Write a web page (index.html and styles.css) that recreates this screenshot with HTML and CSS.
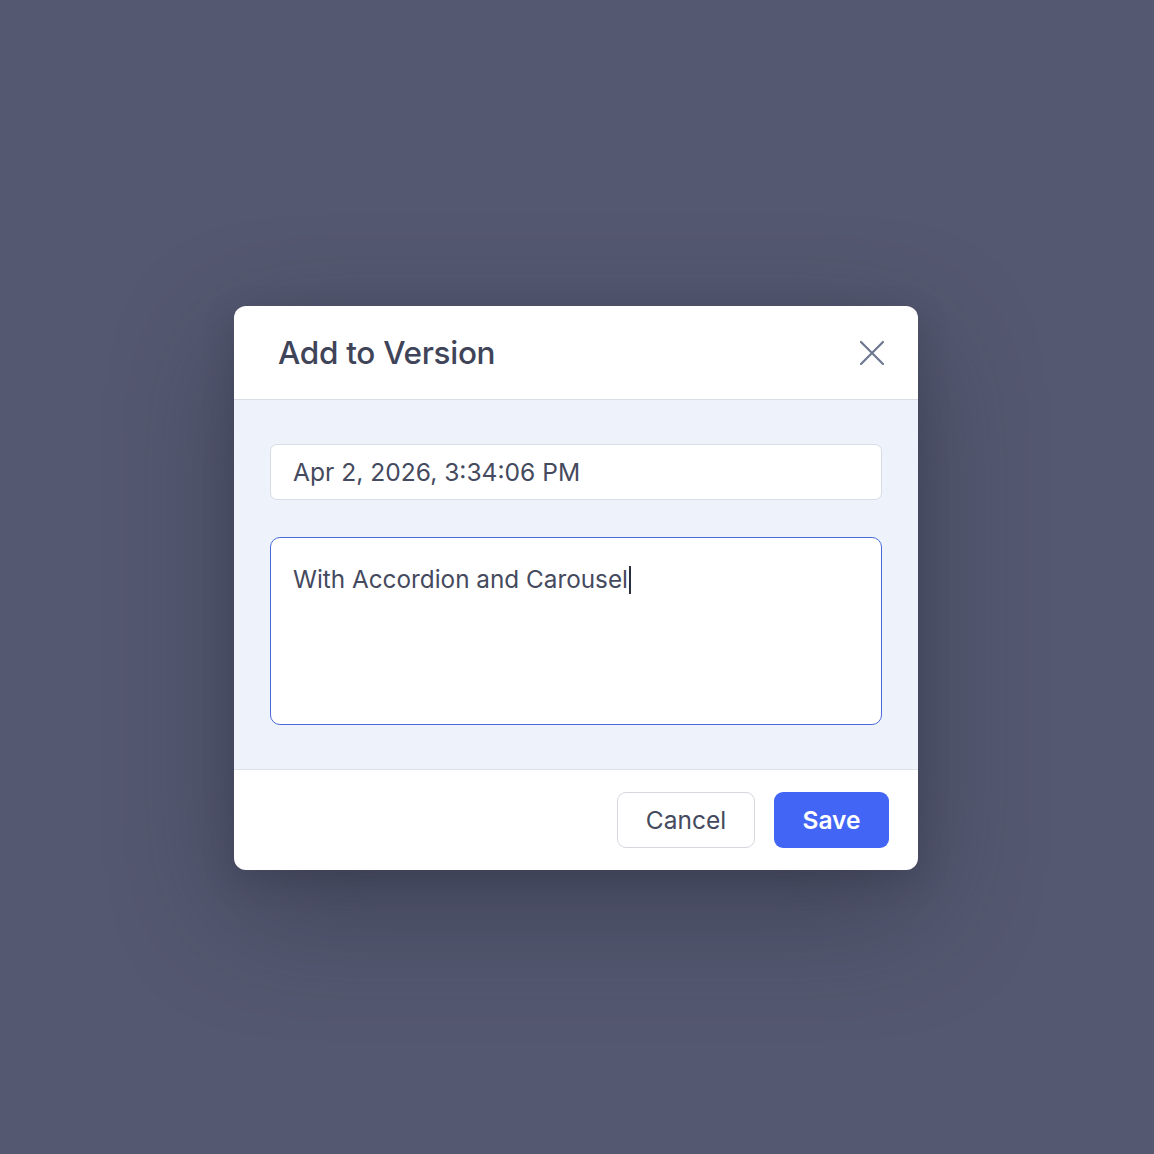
FILE: index.html
```html
<!DOCTYPE html>
<html>
<head>
<meta charset="utf-8">
<link rel="stylesheet" href="styles.css">
</head>
<body>
<div class="overlay">
  <div class="modal">
    <div class="modal-header">
      <h2 class="modal-title">Add to Version</h2>
      <button class="close-btn" aria-label="Close">
        <svg width="26" height="26" viewBox="0 0 26 26"><path d="M2 2 L24 24 M24 2 L2 24" stroke="#6e7791" stroke-width="2.2" stroke-linecap="round" fill="none"/></svg>
      </button>
    </div>
    <div class="modal-body">
      <div class="field">Apr 2, 2026, 3:34:06 PM</div>
      <div class="textarea">With Accordion and Carousel<span class="caret"></span></div>
    </div>
    <div class="modal-footer">
      <button class="btn btn-cancel">Cancel</button>
      <button class="btn btn-save">Save</button>
    </div>
  </div>
</div>
</body>
</html>
```
FILE: styles.css
```css
* { box-sizing: border-box; }
html, body { margin: 0; padding: 0; }
body {
  background: #545870;
  font-family: Inter, "Noto Sans", sans-serif;
  width: 1154px;
  height: 1154px;
}
.overlay {
  height: 1154px;
  display: flex;
  justify-content: flex-start;
  padding-top: 306px;
  padding-left: 234px;
}
.modal {
  width: 684px;
  height: 564px;
  background: #fff;
  border-radius: 12px;
  overflow: hidden;
  display: flex;
  flex-direction: column;
  box-shadow: 0 40px 120px rgba(40, 42, 60, 0.45), 0 10px 30px rgba(40, 42, 60, 0.25);
}
.modal-header {
  height: 94px;
  display: flex;
  align-items: center;
  justify-content: space-between;
  padding: 0 33px 0 44px;
  border-bottom: 1px solid #d9dde6;
}
.modal-title {
  margin: 0;
  font-size: 31.5px;
  font-weight: 500;
  color: #3f4459;
  letter-spacing: -0.3px;
}
.close-btn {
  border: 0;
  background: none;
  padding: 0;
  width: 26px;
  height: 26px;
  display: flex;
}
.modal-body {
  background: #eef2fa;
  padding: 44px 36px 44px 36px;
  display: flex;
  flex-direction: column;
  gap: 37px;
  height: 370px;
  border-bottom: 1px solid #dde1e8;
}
.field {
  height: 56px;
  background: #fff;
  border: 1px solid #d8dce4;
  border-radius: 7px;
  display: flex;
  align-items: center;
  padding: 0 22px;
  font-size: 24.6px;
  color: #454a5e;
}
.textarea {
  height: 188px;
  background: #fff;
  border: 1px solid #4a6ad8;
  border-radius: 10px;
  padding: 24px 22px;
  font-size: 24.3px;
  color: #454a5e;
  line-height: 34px;
}
.caret {
  display: inline-block;
  width: 2px;
  height: 28px;
  background: #2b2e3b;
  vertical-align: -6px;
  margin-left: 1px;
}
.modal-footer {
  flex: 1;
  display: flex;
  justify-content: flex-end;
  align-items: center;
  gap: 19px;
  padding: 0 29px 0 30px;
}
.btn {
  height: 56px;
  border-radius: 9px;
  font-family: Inter, "Noto Sans", sans-serif;
  font-size: 24.5px;
  padding: 0 20px;
}
.btn-cancel {
  width: 138px;
  background: #fff;
  border: 1px solid #d6d8de;
  color: #454a5e;
  font-weight: 400;
}
.btn-save {
  width: 115px;
  background: #4265f6;
  border: 0;
  color: #fff;
  font-weight: 600;
}
```
